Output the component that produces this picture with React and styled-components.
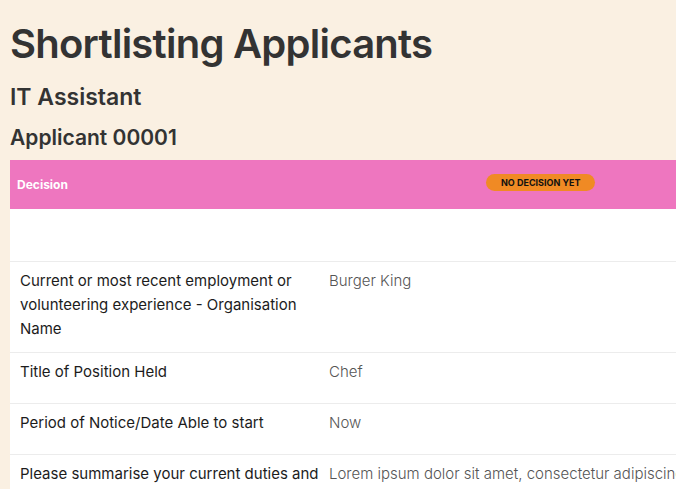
import styled, { createGlobalStyle } from "styled-components";

const GlobalStyle = createGlobalStyle`
  html, body {
    margin: 0;
    padding: 0;
    background: #faf0e2;
  }
  body {
    font-family: "Inter", "Noto Sans", sans-serif;
    color: #333333;
    overflow: hidden;
  }
`;

const rows = [
  {
    label: "Current or most recent employment or volunteering experience - Organisation Name",
    value: "Burger King",
  },
  { label: "Title of Position Held", value: "Chef" },
  { label: "Period of Notice/Date Able to start", value: "Now" },
  {
    label: "Please summarise your current duties and responsibilities",
    value:
      "Lorem ipsum dolor sit amet, consectetur adipiscing elit, sed do eiusmod tempor",
  },
];

export default function App() {
  return (
    <Page>
      <GlobalStyle />
      <Title>Shortlisting Applicants</Title>
      <JobTitle>IT Assistant</JobTitle>
      <ApplicantTitle>Applicant 00001</ApplicantTitle>
      <Table>
        <HeaderRow>
          <HeaderLabel>Decision</HeaderLabel>
          <HeaderValue>
            <Badge>NO DECISION YET</Badge>
          </HeaderValue>
        </HeaderRow>
        <EmptyRow />
        {rows.map((row) => (
          <Row key={row.label}>
            <Label>{row.label}</Label>
            <Value>{row.value}</Value>
          </Row>
        ))}
      </Table>
    </Page>
  );
}

const Page = styled.div`
  padding: 0 0 0 10px;
  width: 900px;
`;

const Title = styled.h1`
  margin: 0;
  padding-top: 19px;
  font-size: 40px;
  line-height: 50px;
  font-weight: 600;
  letter-spacing: -0.75px;
  color: #333333;
`;

const JobTitle = styled.h2`
  margin: 14px 0 0;
  font-size: 23px;
  line-height: 28px;
  font-weight: 600;
`;

const ApplicantTitle = styled.h3`
  margin: 14px 0 0;
  font-size: 21px;
  line-height: 26px;
  font-weight: 600;
`;

const Table = styled.div`
  margin-top: 9px;
  background: #ffffff;
  display: grid;
  grid-template-columns: 319px 1fr;
`;

const HeaderRow = styled.div`
  display: contents;
`;

const HeaderLabel = styled.div`
  background: #ee76bf;
  height: 49px;
  padding-left: 7px;
  display: flex;
  align-items: center;
  color: #ffffff;
  font-size: 12px;
  font-weight: 700;
`;

const HeaderValue = styled.div`
  background: #ee76bf;
  height: 49px;
  padding: 10px 0 0 157px;
  box-sizing: border-box;
`;

const Badge = styled.span`
  display: inline-block;
  background: #f08a24;
  color: #111111;
  font-size: 9px;
  font-weight: 700;
  line-height: 17px;
  padding: 0 15px;
  border-radius: 9px;
`;

const EmptyRow = styled.div`
  grid-column: 1 / -1;
  height: 53px;
  border-bottom: 1px solid #ececec;
  box-sizing: border-box;
`;

const Row = styled.div`
  display: contents;

  & > div {
    border-bottom: 1px solid #ececec;
    min-height: 51px;
    box-sizing: border-box;
    padding-top: 7px;
    padding-bottom: 11px;
    font-size: 15px;
    line-height: 24px;
  }
`;

const Label = styled.div`
  padding-left: 10px;
  padding-right: 4px;
  color: #1c1c1c;
`;

const Value = styled.div`
  color: #555555;
  font-weight: 300;
  white-space: nowrap;
`;
